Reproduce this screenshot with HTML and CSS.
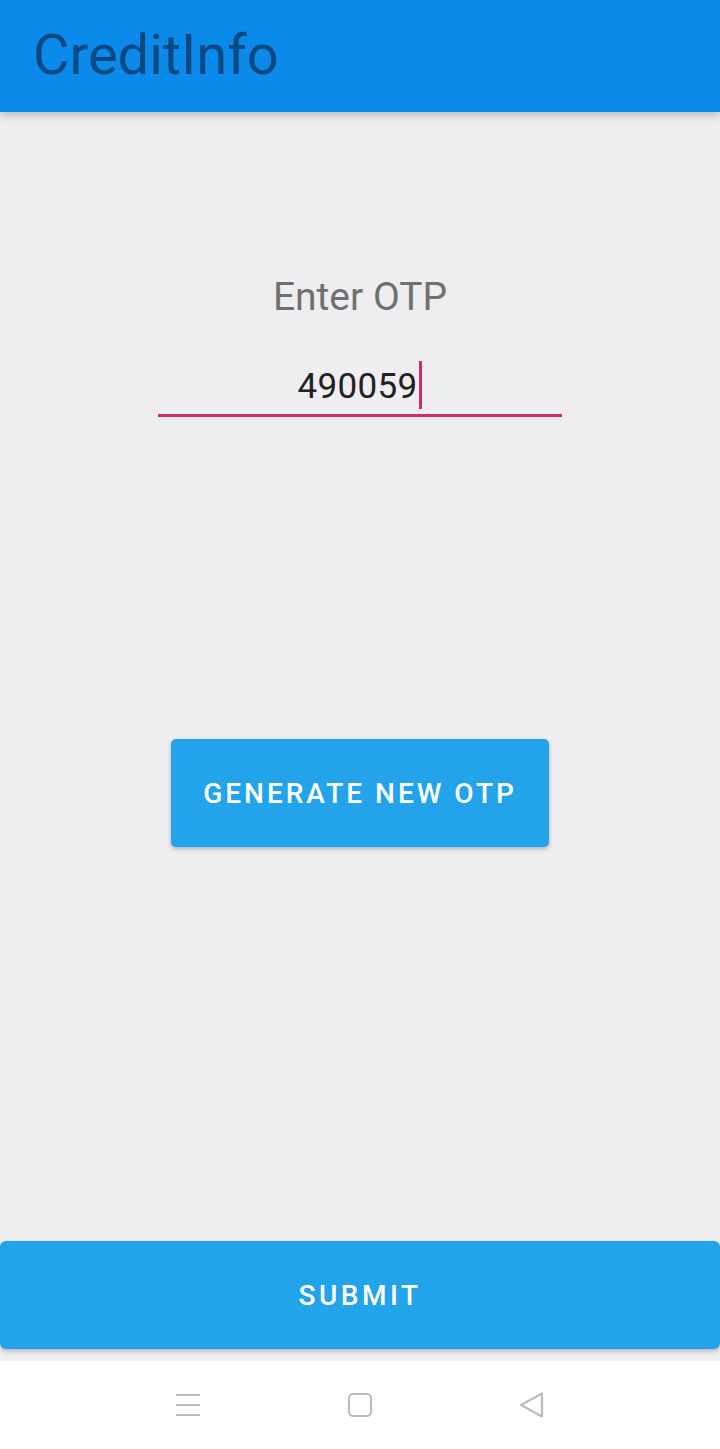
FILE: index.html
```html
<!DOCTYPE html>
<html>
<head>
<meta charset="utf-8">
<link rel="stylesheet" href="styles.css">
</head>
<body>
<div class="screen">
  <header class="appbar"><h1 class="title">CreditInfo</h1></header>
  <main class="content">
    <div class="label">Enter OTP</div>
    <div class="field">
      <span class="value">490059</span><span class="cursor"></span>
    </div>
    <button class="btn gen">GENERATE NEW OTP</button>
  </main>
  <div class="submit-wrap"><button class="btn submit">SUBMIT</button></div>
  <nav class="navbar">
    <svg class="nav-ic" width="28" height="28" viewBox="0 0 28 28"><path d="M2 4h24M2 14h24M2 24h24" stroke="#bdbdbd" stroke-width="2" fill="none"/></svg>
    <svg class="nav-ic" width="28" height="28" viewBox="0 0 28 28"><rect x="3" y="3" width="22" height="22" rx="4" stroke="#bdbdbd" stroke-width="2.2" fill="none"/></svg>
    <svg class="nav-ic" width="28" height="28" viewBox="0 0 28 28"><path d="M24 2.5v23L3 14z" stroke="#bdbdbd" stroke-width="2.2" stroke-linejoin="round" fill="none"/></svg>
  </nav>
</div>
</body>
</html>
```
FILE: styles.css
```css
html, body { margin: 0; padding: 0; }
body { background: #eeeef0; font-family: Roboto, "Noto Sans", sans-serif; }
.screen { width: 720px; height: 1449px; display: flex; flex-direction: column; overflow: hidden; }
.appbar {
  height: 112px; background: #0b8ae9; flex: none;
  box-shadow: 0 3px 8px rgba(0,0,0,0.22); position: relative; z-index: 2;
  display: flex; align-items: center; padding-left: 33px;
}
.title { margin: 0; font-weight: 400; font-size: 56px; color: #0a4a84; line-height: 1; margin-top: -2px; }
.content { flex: 1; display: flex; flex-direction: column; align-items: center; }
.label { margin-top: 161px; font-size: 39px; color: #707070; line-height: 48px; }
.field {
  margin-top: 40px; width: 404px; height: 56px; box-sizing: border-box;
  border-bottom: 3px solid #d22a68; display: flex; justify-content: center; align-items: flex-start;
}
.value { font-size: 35px; color: #222; line-height: 48px; margin-top: 2px; letter-spacing: 0.3px; }
.cursor { width: 3px; height: 48px; background: #d22a68; margin-left: 2px; }
.btn {
  border: 0; background: #22a3ea; color: #fff; font-family: Roboto, sans-serif;
  font-weight: 500; letter-spacing: 3px; border-radius: 5px;
  box-shadow: 0 2px 4px rgba(0,0,0,0.25);
}
.gen { margin-top: 322px; width: 378px; height: 108px; font-size: 28px; padding: 0; }
.submit-wrap { flex: none; height: 120px; }
.submit { width: 720px; height: 108px; font-size: 28px; border-radius: 6px; padding: 0; letter-spacing: 3.5px; }
.navbar {
  height: 88px; flex: none; background: #fff; display: flex; justify-content: center;
  align-items: center; gap: 144px; padding-top: 0;
}
.nav-ic { display: block; }
```
